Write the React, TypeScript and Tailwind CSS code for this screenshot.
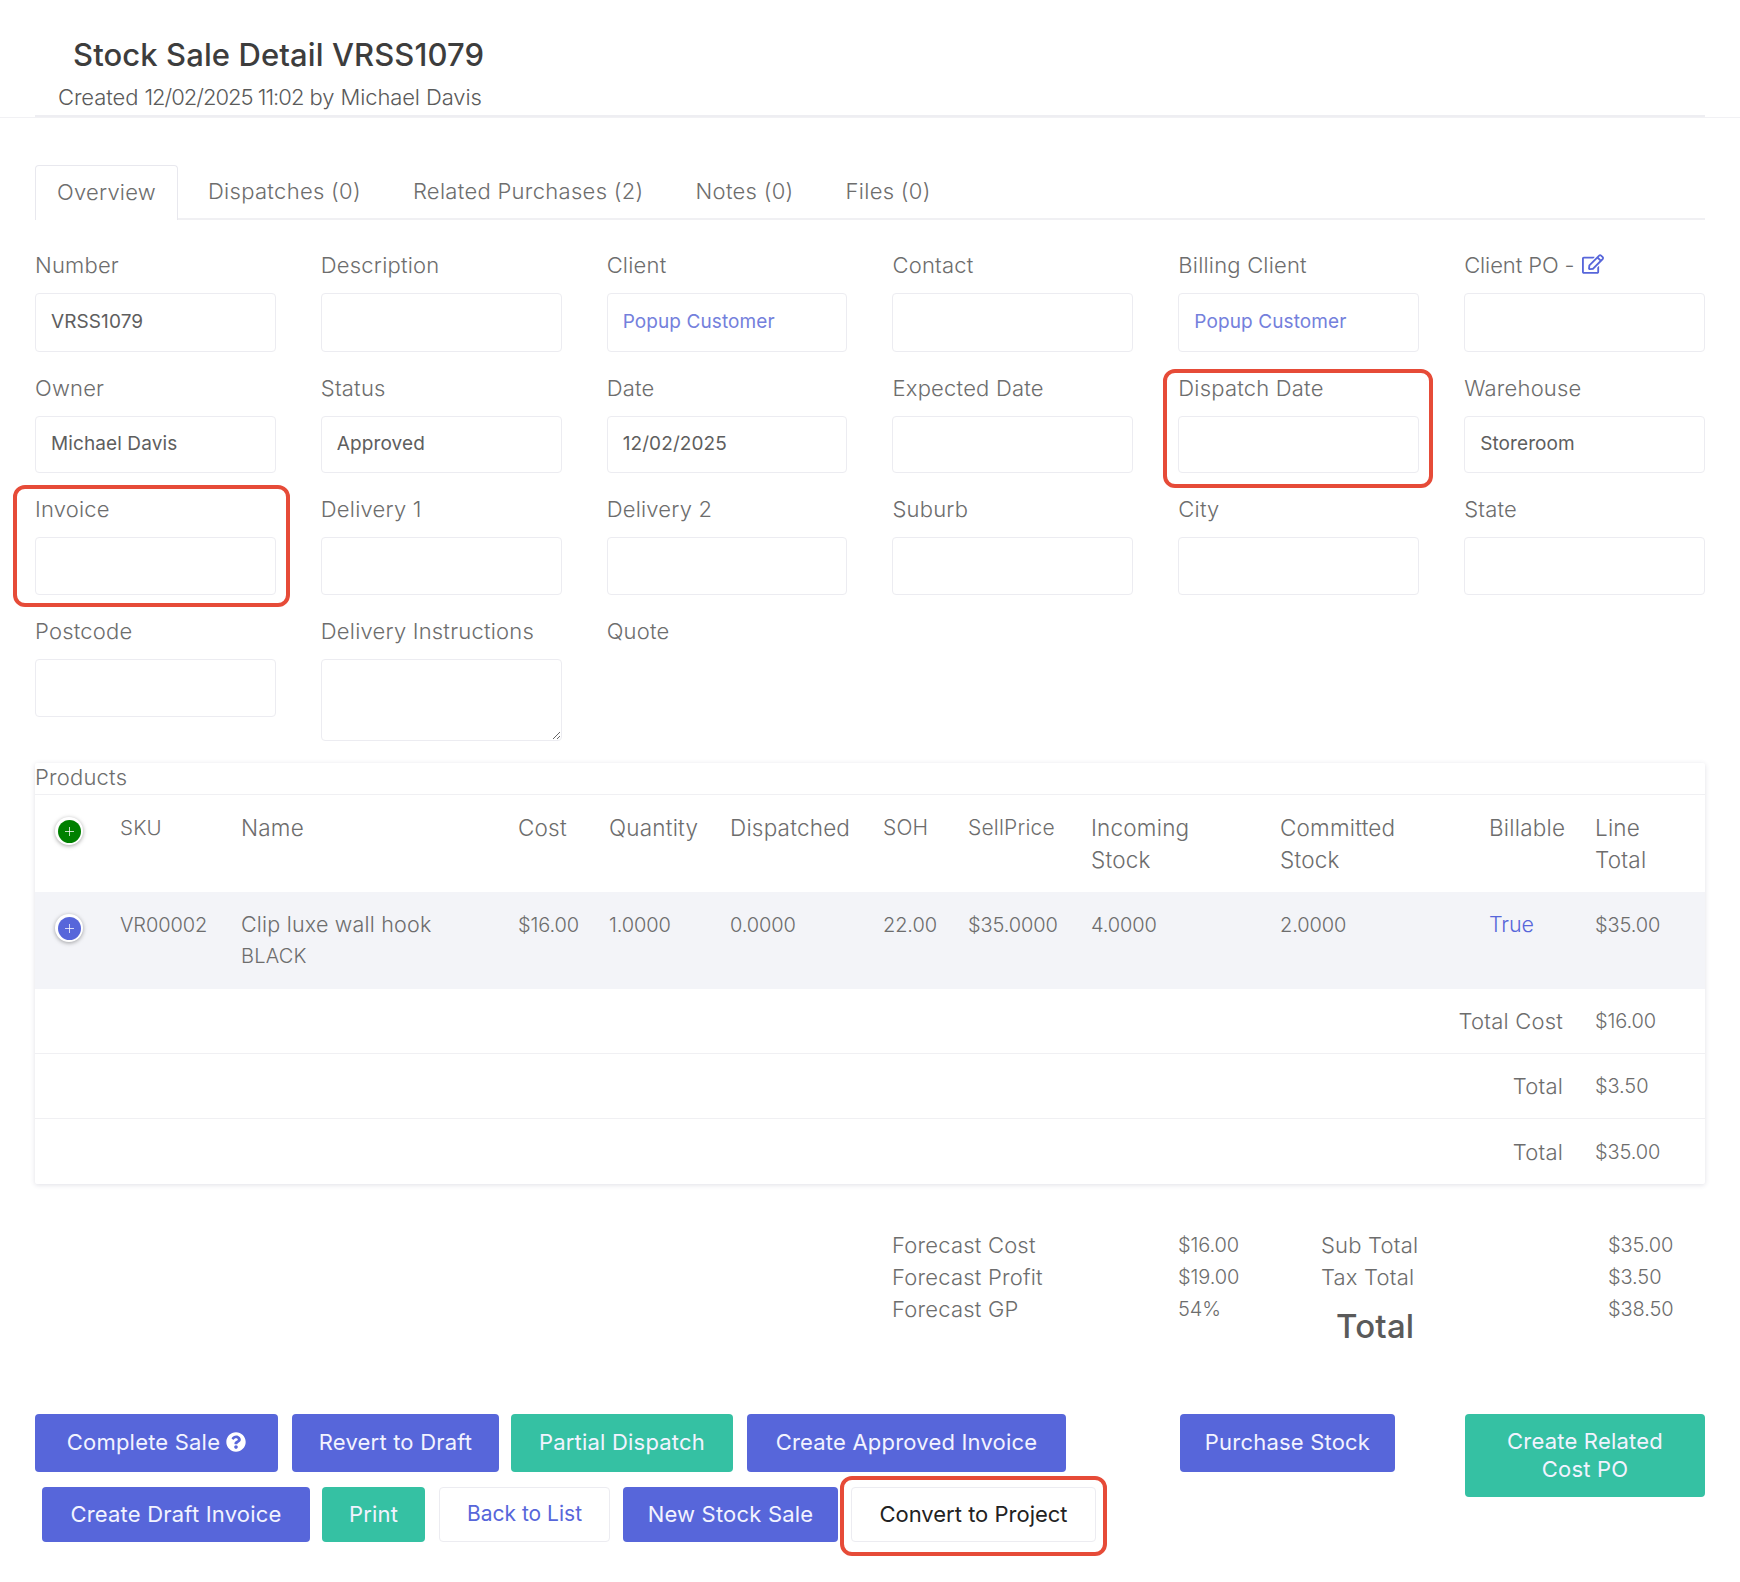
import React from "react";
import { FaRegEdit, FaQuestionCircle } from "react-icons/fa";

type F = { label: React.ReactNode; value?: string; link?: boolean; none?: boolean; area?: boolean; mark?: string };

const rows: { h: string; fields: F[] }[] = [
  {
    h: "h-[59px]",
    fields: [
      { label: "Number", value: "VRSS1079" },
      { label: "Description" },
      { label: "Client", value: "Popup Customer", link: true },
      { label: "Contact" },
      { label: "Billing Client", value: "Popup Customer", link: true },
      {
        label: (
          <span className="flex items-center gap-[8px]">
            <span className="tracking-[-0.1px]">Client PO -</span>
            <FaRegEdit className="text-[#5766da] text-[22px] -mt-[3px]" />
          </span>
        ),
      },
    ],
  },
  {
    h: "h-[57px]",
    fields: [
      { label: "Owner", value: "Michael Davis" },
      { label: "Status", value: "Approved" },
      { label: "Date", value: "12/02/2025" },
      { label: "Expected Date" },
      { label: "Dispatch Date", mark: "-left-[15px] -right-[14px] -top-[5px] -bottom-[15px]" },
      { label: "Warehouse", value: "Storeroom" },
    ],
  },
  {
    h: "h-[58px]",
    fields: [
      { label: "Invoice", mark: "-left-[22px] -right-[14px] -top-[10px] -bottom-[12px]" },
      { label: "Delivery 1" },
      { label: "Delivery 2" },
      { label: "Suburb" },
      { label: "City" },
      { label: "State" },
    ],
  },
  {
    h: "h-[58px]",
    fields: [
      { label: "Postcode" },
      { label: "Delivery Instructions", area: true },
      { label: "Quote", none: true },
    ],
  },
];

const tabs = ["Dispatches (0)", "Related Purchases (2)", "Notes (0)", "Files (0)"];

const cols = "grid grid-cols-[85px_121px_277px_91px_121px_153px_85px_123px_189px_209px_106px_110px]";
const num = "text-[20px] tracking-[-0.1px]";

function Plus({ color }: { color: string }) {
  return (
    <span className="flex items-center justify-center w-[28px] h-[28px] rounded-full bg-white shadow-[0_1px_4px_rgba(0,0,0,0.35)]">
      <svg width="23" height="23" viewBox="0 0 23 23">
        <circle cx="11.5" cy="11.5" r="11.5" fill={color} />
        <path d="M11.5 7v9M7 11.5h9" stroke="#ffffff" strokeOpacity="0.75" strokeWidth="1" />
      </svg>
    </span>
  );
}

function Btn({ w, h, kind, children }: { w: string; h: string; kind: "blue" | "green"; children: React.ReactNode }) {
  const color = kind === "blue" ? "bg-[#5766da]" : "bg-[#35c1a3]";
  return (
    <button className={`${w} ${h} ${color} shrink-0 rounded-[4px] pb-[2px] text-[#f2f3ff] text-[22px] leading-[28px] font-normal tracking-[0.2px] flex items-center justify-center text-center`}>
      {children}
    </button>
  );
}

export default function App() {
  return (
    <div className="w-[1740px] h-[1582px] bg-white overflow-hidden text-[#6d6d6d] font-light text-[22px] leading-[32px] tracking-[0.2px] font-['Inter','Liberation_Sans',sans-serif]">
      <header className="h-[118px] border-b border-[#f1f1f4] pl-[35px] pr-[35px]">
        <div className="h-[117px] border-b-2 border-[#eeeef2] -mb-px">
          <h1 className="pl-[38px] pt-[34px] text-[31px] leading-[42px] font-medium text-[#3d3d3d] tracking-[0.1px]">Stock Sale Detail VRSS1079</h1>
          <p className="pl-[23px] pt-[5px] text-[22px] leading-[32px] font-light text-[#5a5a5a] tracking-[-0.1px]">
            Created <span className="tracking-[-1px]">12/02/2025 11:02</span> by Michael Davis
          </p>
        </div>
      </header>

      <main className="pl-[35px] pr-[35px]">
        <nav className="mt-[47px] h-[55px] flex border-b-2 border-[#f0f0f3]">
          <div className="w-[143px] h-[55px] pb-[2px] rounded-t-[4px] border border-b-0 border-[#e8e8ee] bg-white flex items-center justify-center text-[22px]">Overview</div>
          <div className="flex items-center pl-[30px] pb-[2px] gap-[52px] text-[22px] tracking-[0.3px]">
            {tabs.map((t) => (
              <span key={t}>{t}</span>
            ))}
          </div>
        </nav>

        <section className="mt-[31px] flex flex-col gap-y-[22px]">
          {rows.map((r, i) => (
            <div key={i} className="grid grid-cols-6 gap-x-[45px]">
              {r.fields.map((f, j) => (
                <div key={j} className="relative">
                  <label className="block h-[30px] mb-[12px] leading-[28px] text-[22px]">{f.label}</label>
                  {f.none ? null : f.area ? (
                    <textarea readOnly className="block w-full h-[82px] rounded-[4px] border border-[#ececf1] bg-white outline-none" />
                  ) : (
                    <input
                      readOnly
                      value={f.value ?? ""}
                      className={`block w-full ${r.h} pl-[15px] rounded-[4px] border border-[#ececf1] bg-white outline-none text-[19px] font-normal tracking-[0.1px] pb-[3px] ${f.link ? "text-[#7480dc]" : "text-[#5e5e5e]"}`}
                    />
                  )}
                  {f.mark ? <div className={`absolute ${f.mark} border-[4px] border-[#e64b38] rounded-[12px] pointer-events-none`} /> : null}
                </div>
              ))}
            </div>
          ))}
        </section>

        <section className="mt-[22px] h-[421px] bg-white shadow-[0_1px_5px_rgba(60,60,100,0.16)] rounded-[2px]">
          <div className="h-[32px] border-b border-[#f0f0f3] leading-[29px] text-[22px]">Products</div>
          <div className={`${cols} h-[97px] pt-[17px] text-[22.5px] tracking-[0.2px]`}>
            <div className="flex justify-start pt-[5px] pl-[20px]">
              <Plus color="#008000" />
            </div>
            <div className="text-[20.5px]">SKU</div>
            <div>Name</div>
            <div>Cost</div>
            <div>Quantity</div>
            <div>Dispatched</div>
            <div className="text-[21px]">SOH</div>
            <div className="text-[21px]">SellPrice</div>
            <div>Incoming<br />Stock</div>
            <div>Committed<br />Stock</div>
            <div>Billable</div>
            <div>Line<br />Total</div>
          </div>
          <div className={`${cols} h-[97px] pt-[17px] bg-[#f3f4f8] ${num}`}>
            <div className="flex justify-start pt-[5px] pl-[20px]">
              <Plus color="#5766da" />
            </div>
            <div>VR00002</div>
            <div className="text-[21.5px] leading-[31px] tracking-[0.2px]">Clip luxe wall hook<br /><span className="text-[20px]">BLACK</span></div>
            <div>$16.00</div>
            <div>1.0000</div>
            <div>0.0000</div>
            <div>22.00</div>
            <div>$35.0000</div>
            <div>4.0000</div>
            <div>2.0000</div>
            <div className="text-[#5766da] text-[21.5px] leading-[31px]">True</div>
            <div>$35.00</div>
          </div>
          {[
            ["Total Cost", "$16.00"],
            ["Total", "$3.50"],
            ["Total", "$35.00"],
          ].map(([a, b], i) => (
            <div key={i} className={`h-[65px] flex items-center justify-end ${i < 2 ? "border-b border-[#f0f0f3]" : ""}`}>
              <span>{a}</span>
              <span className={`w-[142px] pl-[32px] ${num}`}>{b}</span>
            </div>
          ))}
        </section>

        <section className="mt-[45px] flex pl-[857px]">
          <div className="w-[286px]">
            <div>Forecast Cost</div>
            <div>Forecast Profit</div>
            <div>Forecast GP</div>
          </div>
          <div className={`w-[143px] ${num}`}>
            <div>$16.00</div>
            <div>$19.00</div>
            <div>54%</div>
          </div>
          <div className="w-[287px]">
            <div>Sub Total</div>
            <div>Tax Total</div>
            <div className="mt-[13px] ml-[15px] text-[33px] leading-[40px] font-medium text-[#5a5a5a]">Total</div>
          </div>
          <div className={num}>
            <div>$35.00</div>
            <div>$3.50</div>
            <div>$38.50</div>
          </div>
        </section>

        <section className="mt-[68px] flex items-start">
          <div className="w-[1143px]">
            <div className="flex">
              <Btn w="w-[243px]" h="h-[58px]" kind="blue">
                <span className="flex items-center gap-[6px]">
                  Complete Sale <FaQuestionCircle className="text-[20px] text-white" />
                </span>
              </Btn>
              <div className="ml-[14px]">
                <Btn w="w-[207px]" h="h-[58px]" kind="blue">Revert to Draft</Btn>
              </div>
              <div className="ml-[12px]">
                <Btn w="w-[222px]" h="h-[58px]" kind="green">Partial Dispatch</Btn>
              </div>
              <div className="ml-[14px]">
                <Btn w="w-[319px]" h="h-[58px]" kind="blue">Create Approved Invoice</Btn>
              </div>
            </div>
            <div className="mt-[15px] flex pl-[7px]">
              <Btn w="w-[268px]" h="h-[55px]" kind="blue">Create Draft Invoice</Btn>
              <div className="ml-[12px]">
                <Btn w="w-[103px]" h="h-[55px]" kind="green">Print</Btn>
              </div>
              <button className="ml-[14px] w-[171px] h-[55px] pb-[2px] rounded-[4px] border border-[#ececf1] bg-white text-[#5766da] text-[21px] font-normal tracking-normal">Back to List</button>
              <div className="ml-[13px]">
                <Btn w="w-[215px]" h="h-[55px]" kind="blue">New Stock Sale</Btn>
              </div>
              <div className="relative ml-[13px]">
                <button className="w-[245px] h-[55px] pb-[2px] rounded-[4px] border border-[#ececf1] bg-white text-[#222222] text-[22px] font-normal tracking-normal">Convert to Project</button>
                <div className="absolute -left-[11px] -right-[11px] -top-[11px] -bottom-[14px] border-[4px] border-[#e64b38] rounded-[12px] pointer-events-none" />
              </div>
            </div>
          </div>
          <div className="w-[287px] pl-[2px]">
            <Btn w="w-[215px]" h="h-[58px]" kind="blue">Purchase Stock</Btn>
          </div>
          <Btn w="w-[240px]" h="h-[83px]" kind="green">Create Related<br />Cost PO</Btn>
        </section>
      </main>
    </div>
  );
}
